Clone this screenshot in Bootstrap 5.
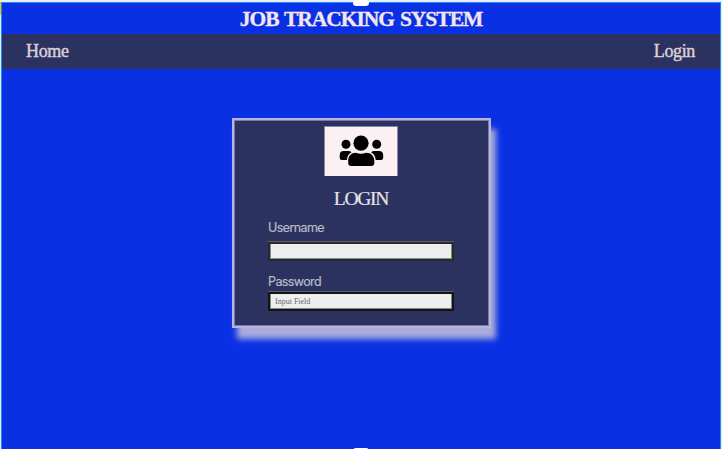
<!DOCTYPE html>
<html lang="en">
<head>
<meta charset="utf-8">
<title>Job Tracking System</title>
<link href="https://cdn.jsdelivr.net/npm/bootstrap@5.3.0/dist/css/bootstrap.min.css" rel="stylesheet">
<style>
body{width:722px;height:449px;background:#e9eef8;font-family:"Liberation Serif",serif;padding:2px 1px 0;overflow:hidden}
.frame{height:447px;background:#0a30e3;border:1px solid #1a8cf5;border-bottom:0}
.site-title{height:31px;line-height:31px;font-size:21.5px;font-weight:700;color:#f5e6ee;padding-top:1px;letter-spacing:-1.02px;word-spacing:1.5px;-webkit-text-stroke:.3px #f5e6ee}
.site-nav{height:35px;background:#2b325f;padding:0 25px 1px 24px}
.site-nav a{font-size:18px;line-height:34px;color:#dccfd9;text-decoration:none;letter-spacing:-.35px;-webkit-text-stroke:.45px #dccfd9}
.login-box{width:259px;height:210px;margin-top:49px;background:#2b325f;border:2px solid #b9b3e0;box-shadow:inset 0 0 0 1px #777ba5,5px 11px 6px #a9addd;padding-top:6px}
.logo-box{width:74px;height:50px;background:#fbf1f3;border:1px solid #898ba8;border-bottom:0}
.login-box h1{font-size:19.5px;line-height:24px;margin:11px 0 0;color:#e9e2e8;letter-spacing:-1.25px;-webkit-text-stroke:.2px #e9e2e8}
.fields{width:186px}
.fields label{display:block;font:12.500px/16px Inter,sans-serif;color:#b9bac4;letter-spacing:-.6px;-webkit-text-stroke:.2px #b9bac4}
.user-label{padding:9px 0 5px}
.pass-label{padding:13px 0 1px}
.fields input{display:block;width:186px;height:19px;background:#eee;border:2px solid #292a2e;border-radius:0;box-shadow:inset -1px -1px #858a85,inset 1px 0 #858a85;padding:0 5px;font-size:8px;outline:0}
.fields .line{border-top:1px solid #5d5e6c}
.fields .line.dark input{border-color:#131419}
.fields input::placeholder{color:#666;opacity:1}
.grip{position:absolute;left:353px;width:16px;height:6px;background:#fff;border-radius:3px}
.grip-top{top:0}
.grip-bottom{top:448px}
.tab-mark{position:absolute;left:0;top:2px;width:1px;height:13px;background:#f5c400}
</style>
<script src="https://cdn.jsdelivr.net/npm/bootstrap@5.3.0/dist/js/bootstrap.bundle.min.js"></script>
</head>
<body class="position-relative m-0">
<div class="frame">
  <header class="site-title text-center">JOB TRACKING SYSTEM</header>
  <nav class="site-nav d-flex justify-content-between align-items-center"><a href="#">Home</a><a href="#">Login</a></nav>
  <main class="login-box mx-auto d-flex flex-column align-items-center">
    <div class="logo-box">
      <svg width="72" height="49" viewBox="325 127 72 49" class="d-block">
        <circle cx="361" cy="143.2" r="7.6"/><circle cx="346" cy="144.3" r="4.5"/><circle cx="376.7" cy="144.3" r="4.5"/>
        <path d="M348.2 163v-2.500c0-4.500 3.200-7.800 7.600-7.800q5.200 2.300 10.400 0c4.700 0 8.100 3.500 8.100 7.800V163q0 3-3 3h-20q-3.100 0-3.100-3z"/>
        <path d="M343.600 151h4.600q2 0 3.400 1.300-4.200 2.300-4.800 7.600h-4.900q-2.200 0-2.200-2.200v-2.400q0-4.300 3.900-4.300zM379 151h-4.600q-2 0-3.400 1.300 4.200 2.300 4.800 7.600h5.200q2.200 0 2.200-2.200v-2.400q0-4.300-4.200-4.300z"/>
      </svg>
    </div>
    <h1>LOGIN</h1>
    <div class="fields">
      <div class="user-label"><label for="user">Username</label></div>
      <div class="line"><input id="user" type="text"></div>
      <div class="pass-label"><label for="pass">Password</label></div>
      <div class="line dark"><input id="pass" type="text" placeholder="Input Field"></div>
    </div>
  </main>
</div>
<div class="grip grip-top"></div><div class="grip grip-bottom"></div><div class="tab-mark"></div>
</body>
</html>
